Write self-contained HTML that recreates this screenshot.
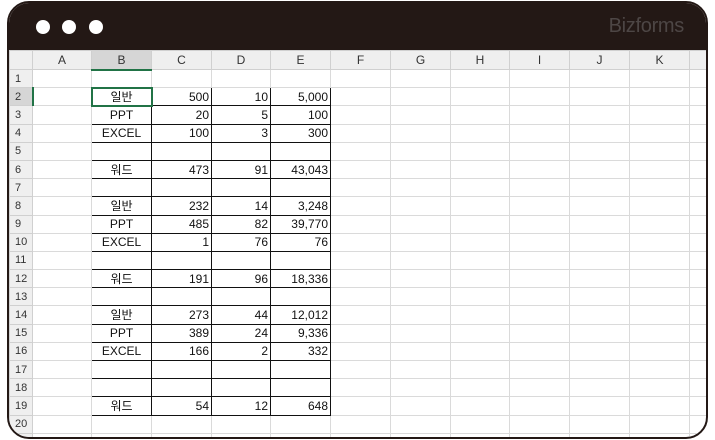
<!DOCTYPE html>
<html><head><meta charset="utf-8"><style>
*{margin:0;padding:0;box-sizing:border-box}
body{width:715px;height:440px;background:#fff;position:relative;overflow:hidden;font-family:"Liberation Sans","Noto Sans CJK KR",sans-serif}
.frame{position:absolute;left:7px;top:1px;width:701px;height:438px;border:2px solid #231815;border-radius:22px;overflow:hidden;background:#fff}
.bar{position:absolute;left:0;top:0;right:0;height:47px;background:#231815}
.dot{position:absolute;top:17px;width:14px;height:14px;border-radius:50%;background:#fff}
.logo{position:absolute;right:22px;top:12px;color:#4d4645;font-size:20px;letter-spacing:-0.3px}
.wrap{position:absolute;left:0;top:47px;width:900px}
table{border-collapse:collapse;table-layout:fixed;width:710px;font-size:12px;color:#111}
td{height:18.2px;border:1px solid #dadada;padding:0;white-space:nowrap;overflow:hidden;line-height:16px}
tr.h td{height:19px;background:#efefef;text-align:center;color:#333;border-color:#d0d0d0}
td.r{background:#efefef;color:#333;text-align:left;text-indent:5px;font-size:11px;border-color:#d0d0d0}
td.n{text-align:right}
td.n span{margin-right:2px}
td.t{text-align:center}
td.b{border:1px solid #111}
</style></head><body>
<div class="frame">
<div class="bar"><div class="dot" style="left:27px"></div><div class="dot" style="left:53px"></div><div class="dot" style="left:80px"></div><div class="logo">Bizforms</div></div>
<div class="wrap">
<table>
<colgroup><col style="width:23px"><col style="width:59px"><col style="width:60px"><col style="width:60px"><col style="width:59px"><col style="width:60px"><col style="width:60px"><col style="width:60px"><col style="width:59px"><col style="width:60px"><col style="width:60px"><col style="width:60px"><col style="width:30px"></colgroup>
<tr class="h"><td></td><td>A</td><td style="background:#d6d6d6;border-bottom:2px solid #217346">B</td><td>C</td><td>D</td><td>E</td><td>F</td><td>G</td><td>H</td><td>I</td><td>J</td><td>K</td><td></td></tr>
<tr><td class="r">1</td><td></td><td></td><td></td><td></td><td></td><td></td><td></td><td></td><td></td><td></td><td></td><td></td></tr>
<tr><td class="r" style="background:#d6d6d6;border-right:2px solid #217346">2</td><td></td><td class="t b" style="border:2px solid #217346">일반</td><td class="n b"><span>500</span></td><td class="n b"><span>10</span></td><td class="n b"><span>5,000</span></td><td></td><td></td><td></td><td></td><td></td><td></td><td></td></tr>
<tr><td class="r">3</td><td></td><td class="t b">PPT</td><td class="n b"><span>20</span></td><td class="n b"><span>5</span></td><td class="n b"><span>100</span></td><td></td><td></td><td></td><td></td><td></td><td></td><td></td></tr>
<tr><td class="r">4</td><td></td><td class="t b">EXCEL</td><td class="n b"><span>100</span></td><td class="n b"><span>3</span></td><td class="n b"><span>300</span></td><td></td><td></td><td></td><td></td><td></td><td></td><td></td></tr>
<tr><td class="r">5</td><td></td><td class="b"></td><td class="b"></td><td class="b"></td><td class="b"></td><td></td><td></td><td></td><td></td><td></td><td></td><td></td></tr>
<tr><td class="r">6</td><td></td><td class="t b">워드</td><td class="n b"><span>473</span></td><td class="n b"><span>91</span></td><td class="n b"><span>43,043</span></td><td></td><td></td><td></td><td></td><td></td><td></td><td></td></tr>
<tr><td class="r">7</td><td></td><td class="b"></td><td class="b"></td><td class="b"></td><td class="b"></td><td></td><td></td><td></td><td></td><td></td><td></td><td></td></tr>
<tr><td class="r">8</td><td></td><td class="t b">일반</td><td class="n b"><span>232</span></td><td class="n b"><span>14</span></td><td class="n b"><span>3,248</span></td><td></td><td></td><td></td><td></td><td></td><td></td><td></td></tr>
<tr><td class="r">9</td><td></td><td class="t b">PPT</td><td class="n b"><span>485</span></td><td class="n b"><span>82</span></td><td class="n b"><span>39,770</span></td><td></td><td></td><td></td><td></td><td></td><td></td><td></td></tr>
<tr><td class="r">10</td><td></td><td class="t b">EXCEL</td><td class="n b"><span>1</span></td><td class="n b"><span>76</span></td><td class="n b"><span>76</span></td><td></td><td></td><td></td><td></td><td></td><td></td><td></td></tr>
<tr><td class="r">11</td><td></td><td class="b"></td><td class="b"></td><td class="b"></td><td class="b"></td><td></td><td></td><td></td><td></td><td></td><td></td><td></td></tr>
<tr><td class="r">12</td><td></td><td class="t b">워드</td><td class="n b"><span>191</span></td><td class="n b"><span>96</span></td><td class="n b"><span>18,336</span></td><td></td><td></td><td></td><td></td><td></td><td></td><td></td></tr>
<tr><td class="r">13</td><td></td><td class="b"></td><td class="b"></td><td class="b"></td><td class="b"></td><td></td><td></td><td></td><td></td><td></td><td></td><td></td></tr>
<tr><td class="r">14</td><td></td><td class="t b">일반</td><td class="n b"><span>273</span></td><td class="n b"><span>44</span></td><td class="n b"><span>12,012</span></td><td></td><td></td><td></td><td></td><td></td><td></td><td></td></tr>
<tr><td class="r">15</td><td></td><td class="t b">PPT</td><td class="n b"><span>389</span></td><td class="n b"><span>24</span></td><td class="n b"><span>9,336</span></td><td></td><td></td><td></td><td></td><td></td><td></td><td></td></tr>
<tr><td class="r">16</td><td></td><td class="t b">EXCEL</td><td class="n b"><span>166</span></td><td class="n b"><span>2</span></td><td class="n b"><span>332</span></td><td></td><td></td><td></td><td></td><td></td><td></td><td></td></tr>
<tr><td class="r">17</td><td></td><td class="b"></td><td class="b"></td><td class="b"></td><td class="b"></td><td></td><td></td><td></td><td></td><td></td><td></td><td></td></tr>
<tr><td class="r">18</td><td></td><td class="b"></td><td class="b"></td><td class="b"></td><td class="b"></td><td></td><td></td><td></td><td></td><td></td><td></td><td></td></tr>
<tr><td class="r">19</td><td></td><td class="t b">워드</td><td class="n b"><span>54</span></td><td class="n b"><span>12</span></td><td class="n b"><span>648</span></td><td></td><td></td><td></td><td></td><td></td><td></td><td></td></tr>
<tr><td class="r">20</td><td></td><td></td><td></td><td></td><td></td><td></td><td></td><td></td><td></td><td></td><td></td><td></td></tr>
<tr><td class="r"></td><td></td><td></td><td></td><td></td><td></td><td></td><td></td><td></td><td></td><td></td><td></td><td></td></tr>
</table>
</div>
</div>
</body></html>
